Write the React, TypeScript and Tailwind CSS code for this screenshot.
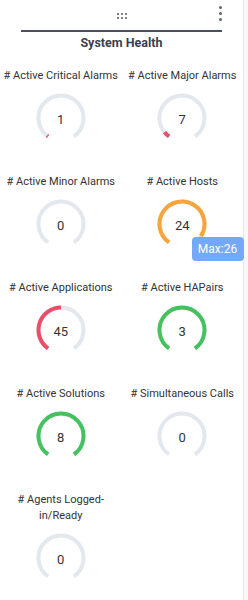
import React from 'react';

type Tile = {
  label: string;
  value: number;
  fill: number;
  color?: string;
  tip?: string;
};

const tiles: Tile[] = [
  { label: '# Active Critical Alarms', value: 1, fill: 0.012, color: '#e8506a' },
  { label: '# Active Major Alarms', value: 7, fill: 0.055, color: '#e8506a' },
  { label: '# Active Minor Alarms', value: 0, fill: 0 },
  { label: '# Active Hosts', value: 24, fill: 24 / 26, color: '#f6a43c', tip: 'Max:26' },
  { label: '# Active Applications', value: 45, fill: 0.5, color: '#e8506a' },
  { label: '# Active HAPairs', value: 3, fill: 1, color: '#43c25e' },
  { label: '# Active Solutions', value: 8, fill: 1, color: '#43c25e' },
  { label: '# Simultaneous Calls', value: 0, fill: 0 },
  { label: '# Agents Logged-in/Ready', value: 0, fill: 0 },
];

const START = 215;
const SPAN = 290;

const pt = (deg: number, r: number) => {
  const a = (deg * Math.PI) / 180;
  return [25 + r * Math.sin(a), 25 - r * Math.cos(a)];
};

const arc = (from: number, to: number, r: number) => {
  const [x1, y1] = pt(from, r);
  const [x2, y2] = pt(to, r);
  const large = to - from > 180 ? 1 : 0;
  return `M ${x1} ${y1} A ${r} ${r} 0 ${large} 1 ${x2} ${y2}`;
};

const Gauge: React.FC<{ value: number; fill: number; color?: string }> = ({ value, fill, color }) => (
  <div className="relative w-[50px] h-[50px] flex items-center justify-center">
    <svg width="50" height="50" viewBox="0 0 50 50" className="absolute inset-0">
      <path d={arc(START, START + SPAN, 22.5)} fill="none" stroke="#e3e8ef" strokeWidth="4" />
      {fill > 0 && color && (
        <path d={arc(START, START + SPAN * fill, 22.5)} fill="none" stroke={color} strokeWidth="4" />
      )}
    </svg>
    <span className="relative text-[13px] text-[#333] leading-none mt-[2px]">{value}</span>
  </div>
);

const App: React.FC = () => {
  return (
    <div className="flex min-h-[600px] bg-[#f7f8fa]" style={{ fontFamily: 'Roboto, "Noto Sans", sans-serif' }}>
      <div className="w-[244px] bg-white border-r border-[#e4e8ee] flex flex-col">
        {/* Header */}
        <div className="grid grid-cols-[1fr_auto_1fr] items-center h-[30px] pt-[1px]">
          <div />
          <div className="grid grid-cols-3 gap-x-[2px] gap-y-[2px]">
            {Array.from({ length: 6 }).map((_, i) => (
              <span key={i} className="w-[2px] h-[2px] bg-[#7d8594]" />
            ))}
          </div>
          <div className="flex justify-end pr-[21px]">
            <div className="flex flex-col gap-[3px] pb-[4px]">
              <span className="w-[3px] h-[3px] rounded-full bg-[#5d6675]" />
              <span className="w-[3px] h-[3px] rounded-full bg-[#5d6675]" />
              <span className="w-[3px] h-[3px] rounded-full bg-[#5d6675]" />
            </div>
          </div>
        </div>
        <div className="mx-[21px] h-[2px] bg-[#4b505c]" />
        <div className="text-center font-bold text-[12.5px] text-[#3a3f4b] leading-[16px] pt-[3px] h-[28px]">
          System Health
        </div>

        {/* Tiles */}
        <div className="grid grid-cols-2">
          {tiles.map((t) => (
            <div key={t.label} className="relative flex flex-col items-center min-h-[106px] pt-[8px] px-[2px]">
              <div className="text-[11px] leading-[16px] text-[#333] text-center">{t.label}</div>
              <div className="mt-[9px]">
                <Gauge value={t.value} fill={t.fill} color={t.color} />
              </div>
              {t.tip && (
                <div className="absolute left-[70px] top-[71px] w-[52px] h-[24px] rounded-[4px] bg-[#74a8f8] text-white text-[12px] flex items-center justify-center">
                  {t.tip}
                </div>
              )}
            </div>
          ))}
        </div>
      </div>
      <div className="flex-1" />
    </div>
  );
};

export default App;
